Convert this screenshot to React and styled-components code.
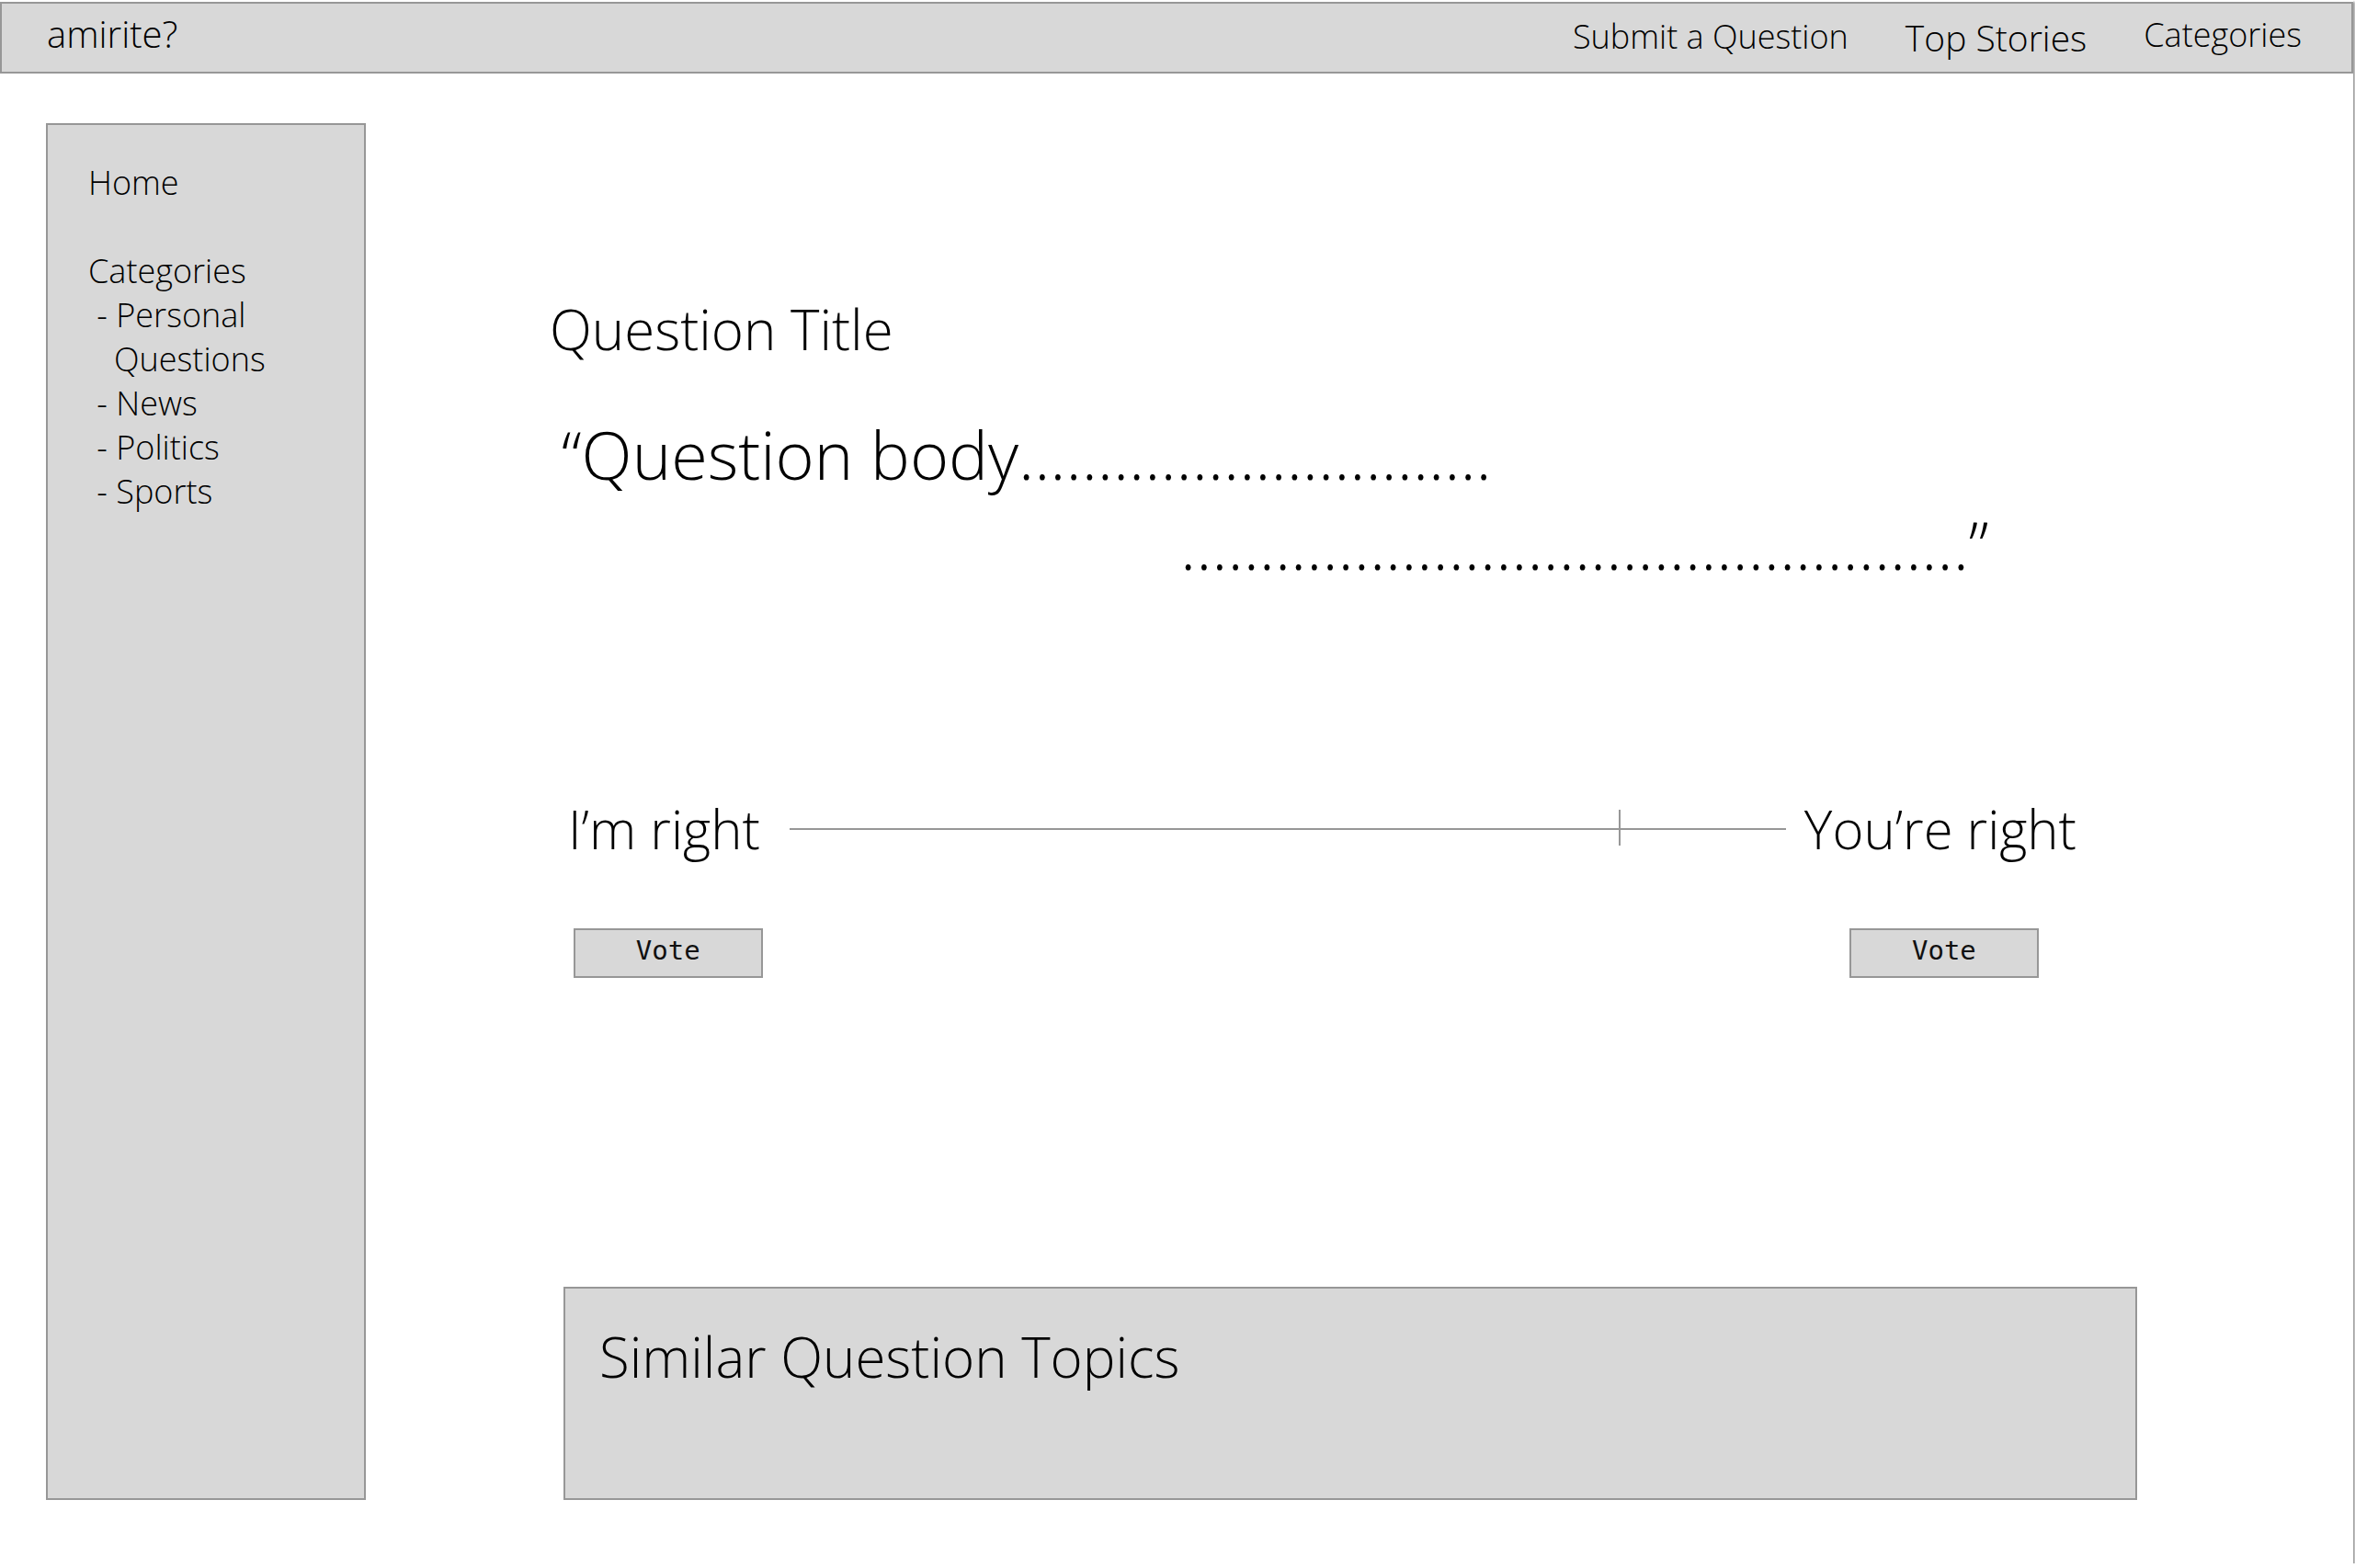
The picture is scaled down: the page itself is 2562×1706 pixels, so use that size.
import React from 'react';
import styled, { createGlobalStyle } from 'styled-components';

const GlobalStyle = createGlobalStyle`
  html, body {
    margin: 0;
    padding: 0;
    background: #ffffff;
  }
  body {
    font-family: "Open Sans", "Noto Sans", sans-serif;
    font-weight: 300;
    color: #000000;
  }
`;

const Frame = styled.div`
  width: 2560px;
  height: 1701px;
  padding-top: 2px;
  box-sizing: border-box;
  background: #ffffff;
  box-shadow: 2px 2px 2px rgba(0, 0, 0, 0.38);
  display: flex;
  flex-direction: column;
`;

const TopBar = styled.header`
  height: 78px;
  box-sizing: border-box;
  background: #d8d8d8;
  border: 2px solid #979797;
  display: flex;
  align-items: center;
  justify-content: space-between;
  padding: 0 54px 0 49px;
`;

const Brand = styled.div`
  font-size: 40px;
  line-height: 1;
  margin-top: -8px;
`;

const Nav = styled.nav`
  display: flex;
  align-items: center;
  gap: 62px;
`;

const NavItem = styled.a`
  font-size: ${p => p.size}px;
  line-height: 1;
  color: #000000;
  text-decoration: none;
  margin-top: ${p => p.lift}px;
`;

const Body = styled.div`
  display: flex;
  padding: 54px 0 0 50px;
  align-items: stretch;
`;

const Sidebar = styled.aside`
  width: 348px;
  height: 1498px;
  box-sizing: border-box;
  background: #d8d8d8;
  border: 2px solid #979797;
  padding: 39px 0 0 44px;
`;

const SideLine = styled.div`
  font-size: 36px;
  line-height: 48px;
  height: 48px;
  white-space: pre;
`;

const Main = styled.main`
  flex: 1;
  display: flex;
  flex-direction: column;
`;

const Title = styled.h1`
  margin: 188px 0 0 200px;
  font-size: 60px;
  font-weight: 300;
  line-height: 72px;
`;

const BodyLine = styled.p`
  margin: ${p => p.first ? '51px' : '0'} 0 0 ${p => p.indent}px;
  font-size: 72px;
  line-height: 98px;
  white-space: pre;
`;

const VoteGrid = styled.div`
  margin: 226px 0 0 220px;
  display: grid;
  grid-template-columns: auto auto auto;
  justify-content: start;
  align-items: center;
  row-gap: 73px;
`;

const Side = styled.div`
  font-size: 58px;
  line-height: 70px;
`;

const Track = styled.div`
  position: relative;
  width: 1084px;
  height: 2px;
  background: #979797;
  margin: 0 20px 0 32px;
`;

const Thumb = styled.div`
  position: absolute;
  top: -20px;
  width: 2px;
  height: 39px;
  background: #979797;
`;

const VoteButton = styled.button`
  justify-self: ${p => p.align};
  width: 206px;
  height: 54px;
  margin-left: ${p => p.shift}px;
  margin-right: ${p => p.pull}px;
  box-sizing: border-box;
  background: #d8d8d8;
  border: 2px solid #979797;
  font-family: "DejaVu Sans Mono", "Liberation Mono", monospace;
  font-size: 29px;
  font-weight: 400;
  color: #111111;
  padding: 0 0 6px;
  cursor: pointer;
`;

const Similar = styled.section`
  margin: auto 0 0 215px;
  width: 1712px;
  height: 232px;
  box-sizing: border-box;
  background: #d8d8d8;
  border: 2px solid #979797;
  padding: 38px 0 0 37px;
`;

const SimilarTitle = styled.h2`
  margin: 0;
  font-size: 60px;
  font-weight: 300;
  line-height: 72px;
`;

const sideItems = [
  'Home',
  '',
  'Categories',
  ' - Personal',
  '   Questions',
  ' - News',
  ' - Politics',
  ' - Sports',
];

const vote = 0.832;

export default function App() {
  return (
    <>
      <GlobalStyle />
      <Frame>
        <TopBar>
          <Brand>amirite?</Brand>
          <Nav>
            <NavItem size={36} lift={-3}>Submit a Question</NavItem>
            <NavItem size={39} lift={-1}>Top Stories</NavItem>
            <NavItem size={36} lift={-6}>Categories</NavItem>
          </Nav>
        </TopBar>
        <Body>
          <Sidebar>
            {sideItems.map((item, i) => (
              <SideLine key={i}>{item}</SideLine>
            ))}
          </Sidebar>
          <Main>
            <Title>Question Title</Title>
            <BodyLine first indent={213}>
              {'\u201CQuestion body' + '.'.repeat(30)}
            </BodyLine>
            <BodyLine indent={886}>
              {'.'.repeat(50) + '\u201D'}
            </BodyLine>
            <VoteGrid>
              <Side>I’m right</Side>
              <Track>
                <Thumb style={{ left: `${vote * 100}%` }} />
              </Track>
              <Side>You’re right</Side>
              <VoteButton align="end" shift={0} pull={-3}>Vote</VoteButton>
              <span />
              <VoteButton align="center" shift={8} pull={0}>Vote</VoteButton>
            </VoteGrid>
            <Similar>
              <SimilarTitle>Similar Question Topics</SimilarTitle>
            </Similar>
          </Main>
        </Body>
      </Frame>
    </>
  );
}
